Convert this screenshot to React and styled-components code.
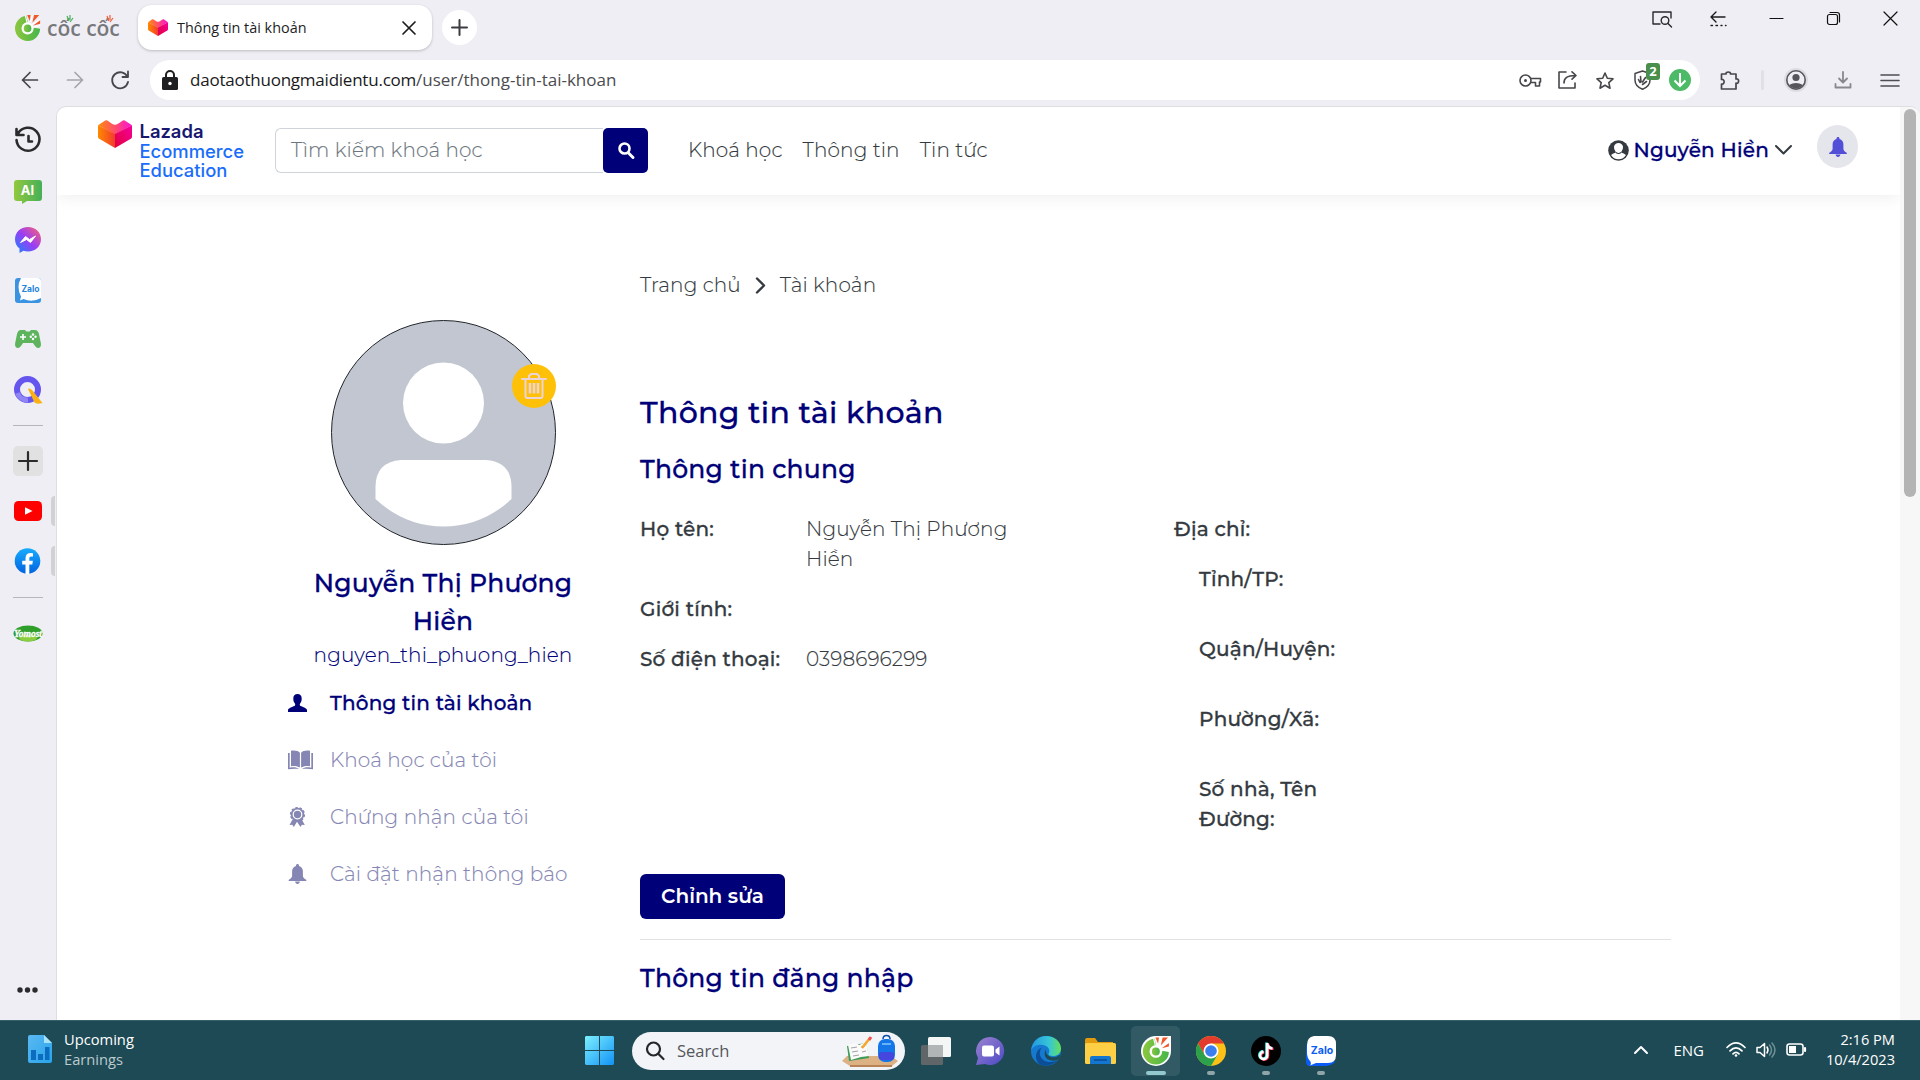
import React from 'react';
import styled, { createGlobalStyle, css } from 'styled-components';

const site = '"Montserrat", "Inter", "Noto Sans", sans-serif';
const system = '"Segoe UI", "Open Sans", "Noto Sans", sans-serif';
const navy = '#000078';

const light = css`
  font-weight: 300;
  letter-spacing: 0.006em;
  -webkit-text-stroke: 0.12px currentColor;
`;
const medium = css`
  font-weight: 500;
  letter-spacing: 0.01em;
  -webkit-text-stroke: 0.3px currentColor;
`;

const GlobalStyle = createGlobalStyle`
  *, *::before, *::after { box-sizing: border-box; }
  html, body { margin: 0; padding: 0; overflow: hidden; }
  svg { display: block; flex: none; overflow: visible; }
  h1, h2, p { margin: 0; }
`;

/* ---------- shell ---------- */
const Screen = styled.div`
  width: 1920px;
  height: 1080px;
  display: flex;
  flex-direction: column;
  background: #efeef4;
  font-family: ${system};
  overflow: hidden;
`;
const TabStrip = styled.div`
  height: 55px;
  flex: none;
  display: flex;
  align-items: flex-start;
  padding-left: 15px;
`;
const Brand = styled.div`
  position: relative;
  width: 123px;
  display: flex;
  align-items: center;
  gap: 6px;
  padding-top: 14px;
`;
const BrandName = styled.span`
  font: 600 21px/28px "Open Sans", sans-serif;
  color: #77787b;
  white-space: nowrap;
`;
const Rays = styled.svg`
  position: absolute;
  top: 15px;
  left: ${(p) => p.$left}px;
`;
const Tab = styled.div`
  width: 294px;
  height: 45px;
  margin-top: 5px;
  padding: 0 17px 0 10px;
  display: flex;
  align-items: center;
  background: #fff;
  border-radius: 14px;
  box-shadow: 0 1px 3px rgba(0, 0, 0, 0.22);
`;
const TabTitle = styled.span`
  flex: 1;
  margin-left: 9px;
  margin-top: -1px;
  font-size: 14.4px;
  color: #1d1d1f;
`;
const NewTab = styled.div`
  width: 35px;
  height: 35px;
  margin: 10px 0 0 10px;
  display: grid;
  place-items: center;
  border-radius: 50%;
  background: #fff;
`;
const WindowControls = styled.div`
  margin: 0 1px 0 auto;
  display: flex;
`;
const Slot = styled.div`
  width: ${(p) => p.$w}px;
  height: ${(p) => p.$h || 40}px;
  margin-right: ${(p) => p.$mr || 0}px;
  flex: none;
  display: flex;
  align-items: center;
  justify-content: center;
`;
const AddressRow = styled.div`
  height: 50px;
  margin-bottom: 1px;
  flex: none;
  display: flex;
  align-items: center;
  padding-left: 7px;
`;
const AddressBar = styled.div`
  width: 1550px;
  height: 40px;
  margin-left: 8px;
  padding: 0 1px 0 12px;
  display: flex;
  align-items: center;
  border-radius: 20px;
  background: #fff;
`;
const Url = styled.span`
  flex: 1;
  margin: -2px 0 0 12px;
  font-size: 17px;
  letter-spacing: -0.23px;
  color: #1a1a1c;
  em { font-style: normal; color: #4b4b50; letter-spacing: 0; }
`;
const ShieldWrap = styled.div` position: relative; `;
const ShieldCount = styled.span`
  position: absolute;
  left: 12px;
  top: -7px;
  width: 14px;
  height: 17px;
  border-radius: 3px;
  background: #4a8f4b;
  color: #fff;
  font: 700 13px/17px "Open Sans", sans-serif;
  text-align: center;
`;
const Divider = styled.i`
  width: 3px;
  height: 20px;
  border-radius: 2px;
  background: #e0e0e6;
`;
const Body = styled.div`
  flex: 1;
  min-height: 0;
  display: flex;
`;

/* ---------- browser side panel ---------- */
const SidePanel = styled.aside`
  width: 56px;
  flex: none;
  display: flex;
  flex-direction: column;
  align-items: flex-start;
  padding-top: 11px;
`;
const SideItem = styled.div`
  width: 55px;
  height: ${(p) => p.$h}px;
  flex: none;
  display: flex;
  align-items: center;
  justify-content: center;
  margin-top: ${(p) => p.$mt || 0}px;
`;
const SideRule = styled.hr`
  width: 30px;
  height: 1px;
  margin: 0;
  border: 0;
  background: #b5b5ba;
`;
const AddBox = styled.div`
  width: 30px;
  height: 30px;
  display: grid;
  place-items: center;
  border-radius: 5px;
  background: #e1e1e2;
`;
const OpenApp = styled(SideItem)`
  justify-content: space-between;
  padding-left: 14px;
  &::after {
    content: '';
    width: 4px;
    height: 30px;
    border-radius: 4px 0 0 4px;
    background: #d2d2d5;
  }
`;
const IconText = styled.text`
  font-family: ${(p) => p.$family || 'Inter, sans-serif'};
  font-weight: ${(p) => p.$weight || 700};
  font-size: ${(p) => p.$size}px;
  font-style: ${(p) => p.$style || 'normal'};
  text-anchor: middle;
`;

/* ---------- page ---------- */
const Page = styled.div`
  flex: 1;
  display: flex;
  border: 1px solid #dedee1;
  border-right: 0;
  border-bottom: 0;
  border-radius: 10px 10px 0 0;
  background: #fff;
  overflow: hidden;
`;
const Viewport = styled.div`
  flex: 1;
  min-width: 0;
  display: flex;
  flex-direction: column;
  font-family: ${site};
  font-size: 20px;
  line-height: 30px;
  color: #343a40;
`;
const ScrollTrack = styled.div`
  width: 20px;
  flex: none;
  padding: 2px 4px;
  background: #f7f7f8;
`;
const ScrollThumb = styled.div`
  width: 12px;
  height: 388px;
  border-radius: 6px;
  background: #b4b4b5;
`;
const Header = styled.header`
  height: 88px;
  flex: none;
  display: flex;
  align-items: flex-start;
  padding-left: 41px;
  box-shadow: 0 2px 16px rgba(0, 0, 0, 0.07);
`;
const Logo = styled.div`
  width: 177px;
  display: flex;
  gap: 7.5px;
  padding-top: 13px;
`;
const LogoWords = styled.div`
  padding-top: 2px;
  font-family: "Inter", sans-serif;
  font-size: 18.4px;
  line-height: 19.7px;
  font-weight: 500;
  color: #1a6dfb;
`;
const LogoName = styled.div`
  font-weight: 600;
  color: #17176f;
`;
const Search = styled.div`
  width: 373px;
  height: 45px;
  margin-top: 21px;
  display: flex;
  border-radius: 6px;
`;
const SearchField = styled.div`
  ${light}
  flex: 1;
  padding: 6px 15px;
  border: 1px solid #ced4da;
  border-right: 0;
  border-radius: 6px 0 0 6px;
  color: #6c757d;
`;
const SearchButton = styled.div`
  width: 45px;
  display: grid;
  place-items: center;
  border-radius: 5px;
  background: ${navy};
`;
const Nav = styled.nav`
  ${light}
  display: flex;
  gap: 20px;
  margin: 28px 0 0 40px;
`;
const UserMenu = styled.div`
  ${medium}
  margin: 28px 0 0 auto;
  display: flex;
  align-items: center;
  color: ${navy};
`;
const UserName = styled.span` margin: 0 6px 0 4px; `;
const BellButton = styled.div`
  width: 41px;
  height: 43px;
  margin: 18px 42px 0 25px;
  display: grid;
  place-items: center;
  border-radius: 50%;
  background: #e5e5ec;
`;
const Content = styled.div`
  flex: 1;
  min-height: 0;
  display: flex;
  gap: 27px;
  padding-left: 216px;
`;
const Profile = styled.aside`
  width: 340px;
  flex: none;
  display: flex;
  flex-direction: column;
  align-items: center;
  padding-top: 125px;
`;
const Avatar = styled.div`
  position: relative;
  width: 225px;
  height: 225px;
  border: 1px solid #212529;
  border-radius: 50%;
  background: #c1c6d1;
`;
const DeleteBadge = styled.div`
  position: absolute;
  top: 43px;
  right: -1px;
  width: 44px;
  height: 44px;
  display: grid;
  place-items: center;
  border-radius: 50%;
  background: #ffc107;
`;
const ProfileName = styled.h2`
  ${medium}
  margin-top: 19px;
  width: 280px;
  font-size: 25px;
  line-height: 38px;
  text-align: center;
  color: ${navy};
`;
const Handle = styled.p`
  ${light}
  color: ${navy};
`;
const Menu = styled.nav`
  width: 326px;
  margin-top: 18px;
  display: flex;
  flex-direction: column;
  gap: 27px;
`;
const MenuItem = styled.div`
  ${(p) => (p.$active ? medium : light)}
  height: 30px;
  display: flex;
  align-items: center;
  padding-left: 8px;
  color: ${(p) => (p.$active ? navy : '#8586b3')};
  white-space: nowrap;
`;
const MenuIcon = styled.span` width: 42px; `;
const Account = styled.main`
  width: 1031px;
  padding-top: 75px;
`;
const Breadcrumb = styled.div`
  ${light}
  display: flex;
  align-items: center;
  svg { margin: 0 14px; }
`;
const Title = styled.h1`
  ${medium}
  margin-top: 95px;
  font-size: 30px;
  line-height: 36px;
  color: ${navy};
`;
const SectionTitle = styled.h2`
  ${medium}
  margin-top: 23px;
  font-size: 25px;
  line-height: 30px;
  color: ${navy};
`;
const Details = styled.div`
  height: 330px;
  margin-top: 30px;
  display: grid;
  grid-template-columns: 534px 1fr;
`;
const Fields = styled.div`
  display: flex;
  flex-direction: column;
  gap: 20px;
`;
const Field = styled.div`
  display: grid;
  grid-template-columns: 166px 220px;
`;
const Label = styled.span`
  ${medium}
  white-space: nowrap;
`;
const Value = styled.span`
  ${light}
`;
const Address = styled.div`
  display: flex;
  flex-direction: column;
`;
const AddressParts = styled.div`
  margin-top: 20px;
  padding-left: 25px;
  display: flex;
  flex-direction: column;
  gap: 40px;
`;
const EditButton = styled.button`
  width: 145px;
  height: 45px;
  margin-top: 30px;
  padding: 0;
  display: block;
  border: 0;
  border-radius: 6px;
  background: ${navy};
  color: #fff;
  font: 600 20px/43px ${site};
`;
const Rule = styled.hr`
  height: 1px;
  margin: 20px 0 0;
  border: 0;
  background: #e2e2e4;
`;

/* ---------- taskbar ---------- */
const Taskbar = styled.footer`
  height: 60px;
  flex: none;
  display: grid;
  grid-template-columns: 577px 780px 1fr;
  background: #1e4a55;
  border-top: 1px solid #35606a;
  color: #fff;
  font-size: 15px;
`;
const Widgets = styled.div`
  display: flex;
  gap: 12px;
  padding: 14px 0 0 28px;
`;
const WidgetText = styled.div`
  margin-top: -6px;
  line-height: 20px;
  font-size: 14.7px;
  span { display: block; color: #bccbce; }
`;
const Apps = styled.div`
  display: flex;
  align-items: center;
`;
const SearchPill = styled.div`
  width: 273px;
  height: 38px;
  flex: none;
  margin-right: 6px;
  padding: 0 7px 0 14px;
  display: flex;
  align-items: center;
  border-radius: 19px;
  background: #f3f4f7;
  font-size: 16.5px;
  color: #55575c;
`;
const PillText = styled.span`
  flex: 1;
  margin: -1px 0 0 13px;
`;
const TaskApp = styled.div`
  width: 49px;
  height: 50px;
  margin-right: 6px;
  flex: none;
  display: grid;
  grid-template-rows: 10px 30px 1fr;
  justify-items: center;
  border-radius: 5px;
  background: ${(p) => (p.$active ? 'rgba(255,255,255,.09)' : 'transparent')};
  svg { grid-row: 2; align-self: center; }
  &::after {
    content: '';
    grid-row: 3;
    align-self: end;
    margin-bottom: 1px;
    width: ${(p) => (p.$active ? 20 : p.$open ? 8 : 0)}px;
    height: 4px;
    border-radius: 2px;
    background: ${(p) => (p.$active ? '#93c8cf' : '#90a5aa')};
  }
`;
const Tray = styled.div`
  display: flex;
  align-items: center;
  justify-content: flex-end;
  padding: 0 25px 2px 0;
`;
const Lang = styled.span` margin: 0 22px 0 25px; `;
const Clock = styled.div`
  width: 89px;
  margin-top: -2px;
  font-size: 14.6px;
  line-height: 20px;
  text-align: right;
`;

/* ---------- drawings ---------- */
const Line = ({ w, h = w, c = '#46464b', s = 1.6, children }) => (
  <svg width={w} height={h} viewBox={`0 0 ${w} ${h}`} fill="none" stroke={c} strokeWidth={s} strokeLinecap="round" strokeLinejoin="round">
    {children}
  </svg>
);

const CocCoc = ({ w = 26, h = 26, white, id }) => (
  <svg width={w} height={h} viewBox="0 0 30 30">
    <defs><linearGradient id={id}><stop stopColor="#8dc63f" /><stop offset="1" stopColor="#45b649" /></linearGradient></defs>
    {white && <path d="M15 0H30V15A15 15 0 1 1 15 0Z" fill="#fff" />}
    <g transform={white ? 'translate(1.8 1.5) scale(.9)' : undefined}>
      <path d="M13 1A14.5 14.5 0 1 0 29 16L20 14.5A6 6 0 1 1 15 9Z" fill={`url(#${id})`} />
      <circle cx="14.5" cy="15.5" r="7" fill="#fff" />
      <circle cx="14.5" cy="15.5" r="4.4" fill={`url(#${id})`} />
      <path d="M14 0l4 0-1 7zM22 0h6l-8 9zM29 6v4l-8 2z" fill="#f1592a" />
      <path d="M12 1l2 8M20 0l-2 8M29 5l-9 6M29 12l-8 2" stroke="#fff" strokeWidth="1.3" />
    </g>
  </svg>
);

const Lazada = ({ w, h, id }) => (
  <svg width={w} height={h} viewBox="0 0 34 29" preserveAspectRatio="none">
    <defs>
      <linearGradient id={`${id}a`}><stop stopColor="#ff8a00" /><stop offset="1" stopColor="#f23b2e" /></linearGradient>
      <linearGradient id={`${id}b`} x1="0" y1="1" x2="1" y2="0"><stop stopColor="#e3003c" /><stop offset="1" stopColor="#f5009b" /></linearGradient>
      <linearGradient id={`${id}c`}><stop stopColor="#ff8c0a" /><stop offset=".5" stopColor="#ff4e6a" /><stop offset="1" stopColor="#fb12d8" /></linearGradient>
    </defs>
    <path d="M0 5.5L7.2.6Q8.5 0 9.7.7L14 3.9Q17 5.7 20 3.9L24.5.7Q25.5 0 26.7.6L34 5.5 17 15Z" fill={`url(#${id}c)`} />
    <path d="M0 5.5L17 14.5V29L1.2 19.5Q0 18.7 0 17.5Z" fill={`url(#${id}a)`} />
    <path d="M34 5.5L17 14.5V29L32.8 19.5Q34 18.7 34 17.5Z" fill={`url(#${id}b)`} />
  </svg>
);

const Bell = ({ w, h, c }) => (
  <svg width={w} height={h} viewBox="0 0 18 20" fill={c}>
    <path d="M9 0c.9 0 1.5.6 1.5 1.5v.4c2.5.7 3.9 2.7 3.9 5.3v4.6c0 1.5.9 2.8 3.2 4 .6.3.5 1.2-.3 1.2H.7c-.8 0-.9-.9-.3-1.2 2.3-1.2 3.2-2.5 3.2-4V7.2c0-2.6 1.4-4.6 3.9-5.3v-.4C7.5.6 8.1 0 9 0ZM6.6 17.6h4.8C11.2 19.1 10.3 20 9 20s-2.2-.9-2.4-2.4Z" />
  </svg>
);

const Zalo = () => (
  <svg width="30" height="30" viewBox="0 0 30 30">
    <path d="M8 2Q0 4 0 14v12q0 3 3 4h17q6-1 9-4z" fill="#0a5cf5" />
    <path d="M8 0h14q8 0 8 8v11q0 8-8 8H10l-6 2.5q1.5-2 .5-4Q1 22 1 17V9Q1 1 8 0Z" fill="#fff" />
    <IconText x="16" y="17.5" $size={10.5} fill="#0a5cf5">Zalo</IconText>
  </svg>
);

const menu = [
  { text: 'Thông tin tài khoản', active: true, icon: (
    <svg width="19" height="18" viewBox="0 0 19 18" fill="currentColor"><path d="M9.5 0c2.7 0 4.2 1.5 4.2 4.5 0 2-.5 3.5-1.3 4.6-.7.9-.8 2-.4 2.5.9 1 6.5 2.2 7 4.4v2H0v-2c.5-2.2 6.1-3.4 7-4.4.4-.5.3-1.6-.4-2.5C5.8 8 5.3 6.5 5.3 4.5 5.3 1.5 6.8 0 9.5 0Z" /></svg>) },
  { text: 'Khoá học của tôi', icon: (
    <svg width="25" height="20" viewBox="0 0 25 20" fill="currentColor"><path d="M3 .8C7 .2 10.4 1 11.9 2.8V17.5C9.5 15.9 6.5 15.6 3 16.2ZM22 .8C18 .2 14.6 1 13.1 2.8V17.5c2.4-1.6 5.4-1.9 8.9-1.3ZM0 3h1.7v14.7c3.6-.8 7-.7 9.3 1.3-3.5-.6-7.3-.4-11 .3ZM25 3h-1.7v14.7c-3.6-.8-7-.7-9.3 1.3 3.5-.6 7.3-.4 11 .3Z" /></svg>) },
  { text: 'Chứng nhận của tôi', icon: (
    <svg width="19" height="20" viewBox="0 0 19 20" fill="currentColor"><path d="M4.5 12.5L1.5 18l2.8-.3L5.8 20 9 14.8 12.5 20l1.3-2.3 3 .3-3-5.5Z" /><circle cx="9.5" cy="7.5" r="6.8" /><circle cx="9.5" cy="7.5" r="6.9" fill="none" stroke="currentColor" strokeWidth="1.4" strokeDasharray="2.5 1.8" /><circle cx="9.5" cy="7.5" r="4.3" fill="none" stroke="#fff" strokeWidth="1.2" /></svg>) },
  { text: 'Cài đặt nhận thông báo', icon: <Bell w={19} h={20} c="currentColor" /> },
];

const fields = [
  { label: 'Họ tên:', value: 'Nguyễn Thị Phương Hiền' },
  { label: 'Giới tính:', value: '' },
  { label: 'Số điện thoại:', value: '0398696299' },
];

const addressParts = [['Tỉnh/TP:'], ['Quận/Huyện:'], ['Phường/Xã:'], ['Số nhà, Tên', 'Đường:']];

const TopBar = () => (
  <TabStrip>
    <Brand>
      <CocCoc id="brand" />
      <BrandName>cốc cốc</BrandName>
      <Rays $left={51} width="7" height="8" viewBox="0 0 7 8" stroke="#49b35a" strokeWidth="1.2"><path d="M1 1l2 5M4 0v5M7 3L4 7" /></Rays>
      <Rays $left={91} width="7" height="8" viewBox="0 0 7 8" stroke="#f05a35" strokeWidth="1.2"><path d="M1 1l2 5M4 0v5M7 3L4 7" /></Rays>
    </Brand>
    <Tab>
      <Lazada w={20} h={17} id="fav" />
      <TabTitle>Thông tin tài khoản</TabTitle>
      <Line w={12} c="#1d1d1f" s={1.7}><path d="M0 0l12 12M12 0L0 12" /></Line>
    </Tab>
    <NewTab><Line w={15} c="#3c3c40" s={2}><path d="M7.5 0v15M0 7.5h15" /></Line></NewTab>
    <WindowControls>
      <Slot $w={57} $h={37}>
        <Line w={20} h={16} c="#2a2a2d" s={1.4}><path d="M8 13H1V1h18v6" /><circle cx="13" cy="9.5" r="3.8" /><path d="M16 12.5l3.5 3.5" /></Line>
      </Slot>
      <Slot $w={57} $h={37}>
        <Line w={17} h={16} c="#1c1c1e" s={1.4}><path d="M15 6H1M6 1L1 6l5 5" /><path d="M1 14.5h1.5M6 14.5h1.5M11 14.5h1M15.5 14.5h.5" /></Line>
      </Slot>
      <Slot $w={58} $h={36}><Line w={13} h={2} c="#111" s={1.2}><path d="M0 1.5h13" /></Line></Slot>
      <Slot $w={57} $h={37}><Line w={13} c="#111" s={1.2}><rect x=".5" y="2.5" width="10" height="10" rx="2" /><path d="M3 .5h7q2.5 0 2.5 2.5v7" /></Line></Slot>
      <Slot $w={57} $h={37}><Line w={13} c="#111" s={1.2}><path d="M0 0l13 13M13 0L0 13" /></Line></Slot>
    </WindowControls>
  </TabStrip>
);

const AddressArea = () => (
  <AddressRow>
    <Slot $w={45}><Line w={16} s={1.7}><path d="M15.5 8H.5M8 .5L.5 8 8 15.5" /></Line></Slot>
    <Slot $w={45}><Line w={16} c="#a5a5aa" s={1.7}><path d="M.5 8h15M8 .5L15.5 8 8 15.5" /></Line></Slot>
    <Slot $w={45}><Line w={18} s={1.8}><path d="M16.5 6A8 8 0 1 0 17 11M17 .5V6h-5.5" /></Line></Slot>
    <AddressBar>
      <svg width="16" height="20" viewBox="0 0 16 20"><path d="M4 8V5a4 4 0 0 1 8 0v3" fill="none" stroke="#1f1f21" strokeWidth="2" /><rect y="7" width="16" height="13" rx="1.5" fill="#1f1f21" /><circle cx="8" cy="13.5" r="1.7" fill="#fff" /></svg>
      <Url>daotaothuongmaidientu.com<em>/user/thong-tin-tai-khoan</em></Url>
      <Slot $w={37}><Line w={22} h={13}><circle cx="6.5" cy="6.5" r="5.5" /><circle cx="6.5" cy="6.5" r="1.5" fill="#46464b" stroke="none" /><path d="M12 4.5h9.5v3.5h-1v4h-4V8.500h-4.5" /></Line></Slot>
      <Slot $w={38}><Line w={19} h={18}><path d="M8 1H1v16h16v-5" /><path d="M6 12c0-5 3-7.5 11.5-7.5M14 .8l4 3.7-4 3.7" /></Line></Slot>
      <Slot $w={38}><Line w={18} h={17}><path d="M9 1l2.3 5.2 5.7.6-4.2 3.8 1.2 5.6L9 13.3 4 16.2l1.2-5.6L1 6.8l5.7-.6z" /></Line></Slot>
      <Slot $w={37}>
        <ShieldWrap>
          <Line w={17} h={20} s={1.5}><path d="M8.5 1L16 3.5V10c0 4.5-3 7.5-7.5 9.3C4 17.5 1 14.5 1 10V3.5Z" /><path d="M4.5 9.5l1.5 3M6.5 6.5l.5 5.5M8.5 12l3-4.5M8.5 14.5l4-3" strokeWidth="1.6" /></Line>
          <ShieldCount>2</ShieldCount>
        </ShieldWrap>
      </Slot>
      <Slot $w={38}>
        <svg width="22" height="22" viewBox="0 0 22 22"><circle cx="11" cy="11" r="11" fill="#4dba68" /><path d="M11 4v13M5.5 11.5L11 17l5.5-5.5" fill="none" stroke="#fff" strokeWidth="2" /></svg>
      </Slot>
    </AddressBar>
    <Slot $w={60}><Line w={20} h={19} s={1.7}><path d="M1.5 3H6C5.5.3 11 .3 10.5 3H16v5c3.5-.8 3.5 5 0 4.2V18H1.5v-5c3.5.8 3.5-5.2 0-4.5Z" /></Line></Slot>
    <Slot $w={5}><Divider /></Slot>
    <Slot $w={61}>
      <svg width="24" height="24" viewBox="0 0 24 24"><circle cx="12" cy="12" r="12" fill="#dcdce1" /><circle cx="12" cy="12" r="9.2" fill="#efeef4" stroke="#55555b" strokeWidth="1.6" /><circle cx="12" cy="9.5" r="3.6" fill="#55555b" /><path d="M5 17q7-4 14 0-7 7.500-14 0" fill="#55555b" /></svg>
    </Slot>
    <Slot $w={33}><Line w={16} h={16} c="#88888d" s={1.8}><path d="M8 0v10M4 6.5L8 10.5l4-4M.5 12v3.5h15V12" /></Line></Slot>
    <Slot $w={61}><Line w={18} h={13} c="#4d4d52" s={1.6}><path d="M0 1h18M0 6.5h18M0 12h18" /></Line></Slot>
  </AddressRow>
);

const LeftPanel = () => (
  <SidePanel>
    <SideItem $h={48}><Line w={26} h={26} c="#2b2b2d" s={2.6}><path d="M3 5.5A11.5 11.5 0 1 1 1.5 12M1.5 1v6h7M13.5 8v5.5H17" /></Line></SideItem>
    <SideItem $h={54}>
      <svg width="28" height="24" viewBox="0 0 28 24"><defs><linearGradient id="ai"><stop stopColor="#93c83d" /><stop offset="1" stopColor="#46b058" /></linearGradient></defs><path d="M3 0h22q3 0 3 3v15q0 3-3 3H13l-5 3v-3H3q-3 0-3-3V3q0-3 3-3Z" fill="url(#ai)" /><IconText x="13.5" y="14.5" $size={13} fill="#fff">AI</IconText></svg>
    </SideItem>
    <SideItem $h={42}>
      <svg width="26" height="26" viewBox="0 0 26 26"><defs><linearGradient id="ms" x1="0" y1="1" x2="1" y2="0"><stop stopColor="#1388ff" /><stop offset=".5" stopColor="#9a3df5" /><stop offset="1" stopColor="#ff6470" /></linearGradient></defs><path d="M13 0C5.5 0 0 5.3 0 12.3c0 3.9 1.7 7 4.5 9.2V26l4-2.2c1.4.4 2.9.6 4.5.6 7.5 0 13-5.3 13-12.2S20.5 0 13 0Z" fill="url(#ms)" /><path d="M5.5 15.5L10.5 9.5l4 3 6-3.5-5 6.5-4-3z" fill="#fff" stroke="#fff" strokeLinejoin="round" /></svg>
    </SideItem>
    <SideItem $h={58}>
      <svg width="26" height="25" viewBox="0 0 26 25"><rect width="26" height="25" rx="3" fill="#3a93e0" /><path d="M6 0h17q3 0 3 3v17Q17 25 8.5 21L5 22.5l1-4Q1 9 6 0Z" fill="#fff" /><IconText x="15.5" y="13.5" $size={8.5} fill="#1f86dc">Zalo</IconText></svg>
    </SideItem>
    <SideItem $h={40}>
      <svg width="26" height="18" viewBox="0 0 26 18"><path d="M6 0h4l1.5 1.5h3L16 0h4q3 0 4 4l2 10q0 4-3 4-2 0-5-5H8q-3 5-5 5-3 0-3-4L2 4q1-4 4-4Z" fill="#5db45d" /><path d="M8 4v6M5 7h6" stroke="#fff" strokeWidth="1.6" /><g fill="#fff"><circle cx="18" cy="4.5" r="1.2" /><circle cx="18" cy="9" r="1.2" /><circle cx="15.8" cy="6.8" r="1.2" /><circle cx="20.5" cy="6.8" r="1.2" /></g></svg>
    </SideItem>
    <SideItem $h={62}>
      <svg width="28" height="28" viewBox="0 0 28 28"><circle cx="13.5" cy="13.5" r="10.5" fill="none" stroke="#6555ef" strokeWidth="6" /><path d="M3.5 17A10.5 10.5 0 0 0 14 24" fill="none" stroke="#b9b4fa" strokeWidth="5" opacity=".5" /><path d="M14 13q1-1.5 4 1l10.5 13q-6 1.5-8-.5z" fill="#fbb116" /></svg>
    </SideItem>
    <SideItem $h={9}><SideRule /></SideItem>
    <SideItem $h={62}><AddBox><Line w={20} c="#2b2b2d" s={2.2}><path d="M10 1v18M1 10h18" /></Line></AddBox></SideItem>
    <OpenApp $h={38}><svg width="28" height="20" viewBox="0 0 28 20"><rect width="28" height="20" rx="4.5" fill="#f00" /><path d="M11 6.2l7.5 3.8-7.5 3.8z" fill="#fff" /></svg></OpenApp>
    <OpenApp $h={62}>
      <svg width="27" height="26" viewBox="0 0 26 26"><defs><linearGradient id="fb" x2="0" y2="1"><stop stopColor="#18acfe" /><stop offset="1" stopColor="#0163e0" /></linearGradient></defs><circle cx="13" cy="13" r="12.8" fill="url(#fb)" /><path d="M11 26v-9.5H7.7v-3.7H11v-2.6C11 6.8 13 5 16 5l2.5.2v3.2h-1.7c-1.5 0-2 .9-2 2v2.4h3.6l-.6 3.7h-3V26Z" fill="#fff" /></svg>
    </OpenApp>
    <SideItem $h={10}><SideRule /></SideItem>
    <SideItem $h={62}>
      <svg width="30" height="17" viewBox="0 0 30 17"><ellipse cx="15" cy="8.5" rx="14.5" ry="8" fill="#2f9e2b" /><ellipse cx="15" cy="13" rx="9" ry="3.5" fill="#8ace3f" /><IconText x="15" y="11.5" $size={9.5} $style="italic" $family="Liberation Serif, serif" fill="#fff" stroke="#fff" strokeWidth=".3">Yomost</IconText></svg>
    </SideItem>
    <SideItem $h={40} $mt={306}>
      <svg width="21" height="6" viewBox="0 0 21 6" fill="#2b2b2d"><circle cx="3" cy="3" r="2.7" /><circle cx="10.5" cy="3" r="2.7" /><circle cx="18" cy="3" r="2.7" /></svg>
    </SideItem>
  </SidePanel>
);

const SiteHeader = () => (
  <Header>
    <Logo>
      <Lazada w={34} h={28} id="logo" />
      <LogoWords><LogoName>Lazada</LogoName><div>Ecommerce</div><div>Education</div></LogoWords>
    </Logo>
    <Search>
      <SearchField>Tìm kiếm khoá học</SearchField>
      <SearchButton><Line w={16} h={17} c="#fff" s={2.6}><circle cx="6.5" cy="6.5" r="5" /><path d="M10.5 11l4.5 4.5" strokeWidth="3" /></Line></SearchButton>
    </Search>
    <Nav><span>Khoá học</span><span>Thông tin</span><span>Tin tức</span></Nav>
    <UserMenu>
      <svg width="21" height="21" viewBox="0 0 21 21"><circle cx="10.5" cy="10.5" r="10.3" fill="#343a40" /><path d="M3 15Q5 13 8 12.5 5.5 9 6 6.5 7 3 10.5 3T15 6.5Q15.5 9 13 12.5q3 .5 5 2.5-2.5 4.2-7.5 4.2T3 15Z" fill="#fff" /><path d="M8 12.5q2.5 2 5 0" stroke="#343a40" fill="none" strokeWidth="1.2" /></svg>
      <UserName>Nguyễn Hiền</UserName>
      <Line w={17} h={10} c="#343a40" s={2}><path d="M1 1l7.5 7.5L16 1" /></Line>
    </UserMenu>
    <BellButton><Bell w={18} h={20} c="#5350d8" /></BellButton>
  </Header>
);

const ProfilePanel = () => (
  <Profile>
    <Avatar>
      <svg width="223" height="223" viewBox="0 0 223 223" fill="#fff"><circle cx="111.5" cy="82" r="40.5" /><path d="M69 139H154q25.500 2 25.500 27v12Q150 205.500 111.500 205.500T43.500 178v-12q0-25 25.500-27Z" /></svg>
      <DeleteBadge>
        <Line w={24} h={26} c="#ecd3d8" s={2}><path d="M0 6h24M7 5.5V3l2-2h6l2 2v2.5M3.5 6.5V23q0 2 2 2h13q2 0 2-2V6.5" /><path d="M8 10v10.5M12 10v10.5M16 10v10.5" strokeLinecap="butt" strokeWidth="2.5" /></Line>
      </DeleteBadge>
    </Avatar>
    <ProfileName>Nguyễn Thị Phương Hiền</ProfileName>
    <Handle>nguyen_thi_phuong_hien</Handle>
    <Menu>
      {menu.map((m) => (
        <MenuItem key={m.text} $active={m.active}><MenuIcon>{m.icon}</MenuIcon>{m.text}</MenuItem>
      ))}
    </Menu>
  </Profile>
);

const AccountInfo = () => (
  <Account>
    <Breadcrumb>
      <span>Trang chủ</span>
      <Line w={11} h={17} c="#343a40" s={2.4}><path d="M2 1.5l7 7-7 7" /></Line>
      <span>Tài khoản</span>
    </Breadcrumb>
    <Title>Thông tin tài khoản</Title>
    <SectionTitle>Thông tin chung</SectionTitle>
    <Details>
      <Fields>
        {fields.map((f) => (
          <Field key={f.label}><Label>{f.label}</Label><Value>{f.value}</Value></Field>
        ))}
      </Fields>
      <Address>
        <Label>Địa chỉ:</Label>
        <AddressParts>
          {addressParts.map((lines) => (
            <div key={lines[0]}>
              {lines.map((l) => (<div key={l}><Label>{l}</Label></div>))}
            </div>
          ))}
        </AddressParts>
      </Address>
    </Details>
    <EditButton>Chỉnh sửa</EditButton>
    <Rule />
    <SectionTitle>Thông tin đăng nhập</SectionTitle>
  </Account>
);

const WindowsTaskbar = () => (
  <Taskbar>
    <Widgets>
      <svg width="24" height="28" viewBox="0 0 24 28"><defs><linearGradient id="wd" x2="1" y2="1"><stop stopColor="#5cb8f2" /><stop offset="1" stopColor="#27a5ea" /></linearGradient></defs><path d="M2 0h14l8 8v18q0 2-2 2H2q-2 0-2-2V2Q0 0 2 0Z" fill="url(#wd)" /><path d="M16 0l8 8h-8z" fill="#a7e2fb" /><path d="M3 15h5v10H3zM10 19h5v6h-5zM17 12h4.5v13H17z" fill="#0b6cc0" /></svg>
      <WidgetText>Upcoming<span>Earnings</span></WidgetText>
    </Widgets>
    <Apps>
      <Slot $w={45} $mr={10}>
        <svg width="29" height="29" viewBox="0 0 29 29"><defs><linearGradient id="win" x2="1" y2="1"><stop stopColor="#7df0ff" /><stop offset="1" stopColor="#1292f5" /></linearGradient></defs><path d="M1 0h13v14H0V1zM15 0h13l1 1v13H15zM0 15h14v14H1l-1-1zM15 15h14v13l-1 1H15z" fill="url(#win)" /></svg>
      </Slot>
      <SearchPill>
        <Line w={18} h={19} c="#26272b" s={2.2}><circle cx="7.5" cy="8" r="6.5" /><path d="M12.5 13l5 5" /></Line>
        <PillText>Search</PillText>
        <svg width="56" height="32" viewBox="0 0 56 32">
          <path d="M0 26l5-5h44l7 5-6 5H8z" fill="#dcb184" /><path d="M8 31h42" stroke="#b98355" strokeWidth="2" />
          <path d="M5 11l19-3 3 15-20 3z" fill="#3c9b57" /><path d="M6 10l8-2 3 2 7-3 3 14-8 1-10 3z" fill="#fafafa" /><path d="M9 13l6-1M10 17l6-1M11 21l6-1M19 12l4-1M20 17l4-1" stroke="#8c8c92" strokeWidth=".8" />
          <path d="M28 3l-8 10" stroke="#f6a42a" strokeWidth="2.5" /><path d="M29 2l-2 3" stroke="#ef5350" strokeWidth="3" />
          <rect x="36" y="4" width="17" height="23" rx="7" fill="#1576e8" /><path d="M41 4q0-3.5 3.5-3.5T48 4" stroke="#0b4fae" fill="none" strokeWidth="1.5" /><rect x="37" y="17" width="15" height="8" rx="3" fill="#4546dd" /><path d="M40 9h9" stroke="#80c8ff" strokeWidth="1.5" />
        </svg>
      </SearchPill>
      <TaskApp>
        <svg width="30" height="28" viewBox="0 0 30 28"><rect x="0" y="8" width="22" height="20" rx="1.5" fill="#606568" /><rect x="7" y="0" width="23" height="20" rx="1.5" fill="#f4f5f5" /><rect x="7" y="8" width="15" height="12" fill="#b2b5b6" /></svg>
      </TaskApp>
      <TaskApp>
        <svg width="29" height="28" viewBox="0 0 29 28"><defs><linearGradient id="tm" y2="1" x2="1"><stop stopColor="#9c83d1" /><stop offset="1" stopColor="#4c49c5" /></linearGradient></defs><path d="M14.5 0A14 14 0 1 1 9 27L0 28l2-7A14 14 0 0 1 14.5 0Z" fill="url(#tm)" /><rect x="6" y="8.5" width="12" height="11" rx="2" fill="#fff" /><path d="M19.5 12.5l4-3v9l-4-3z" fill="#fff" /></svg>
      </TaskApp>
      <TaskApp>
        <svg width="30" height="30" viewBox="0 0 30 30"><defs><linearGradient id="ed"><stop stopColor="#2497e0" /><stop offset=".6" stopColor="#36c5d8" /><stop offset="1" stopColor="#64e05a" /></linearGradient></defs><circle cx="15" cy="15" r="15" fill="#1479cf" /><path d="M0 15C1 5 8 0 15 0c9 0 15 6 15 12.5 0 5-4 7.5-7.5 7.5-4 0-6-1-4.5-3 1-1.5.5-5-3-7C9.5 7.5 2 9 0 15Z" fill="url(#ed)" /><path d="M11 11.5C6 17 10 26 19 26q5 0 8-2.5Q22 30 14 30 4 28.5 5 19q.8-5.5 6-7.5Z" fill="#0b4e97" /><path d="M15 13q-1 6 5 8 5 1 9.500-2.500L28 23q-6 3.500-12 0-4-4-1-10Z" fill="#1e4a55" /></svg>
      </TaskApp>
      <TaskApp>
        <svg width="31" height="26" viewBox="0 0 31 26"><path d="M0 2q0-2 2-2h8l3 4h15v6H0z" fill="#e29b0c" /><rect y="5" width="31" height="21" rx="1.5" fill="#fdcf45" /><path d="M5 26v-6q0-2 2-2h17q2 0 2 2v6z" fill="#1376cf" /><path d="M9 22h13" stroke="#0a4b94" strokeWidth="1.5" /></svg>
      </TaskApp>
      <TaskApp $active><CocCoc w={30} h={30} white id="task" /></TaskApp>
      <TaskApp $open>
        <svg width="30" height="30" viewBox="0 0 30 30"><circle cx="15" cy="15" r="15" fill="#fbc116" /><path d="M2 7.5A15 15 0 0 1 28 7.5H15L8.5 18.7Z" fill="#e33b2e" /><path d="M2 7.5A15 15 0 0 0 15 30L21.5 18.7 8.5 18.7Z" fill="#2ca14c" /><circle cx="15" cy="15" r="7.5" fill="#fff" /><circle cx="15" cy="15" r="5.8" fill="#3b7fee" /></svg>
      </TaskApp>
      <TaskApp $open>
        <svg width="30" height="30" viewBox="0 0 30 30"><circle cx="15" cy="15" r="15" fill="#000" /><g fill="none" strokeWidth="2.6"><path d="M15.5 6.5v12.5a3.6 3.6 0 1 1-3.6-3.6M15.5 7q.6 4.5 5.5 5" stroke="#25f4ee" /><path d="M17 7.5v12.5a3.6 3.6 0 1 1-3.6-3.6M17 8q.6 4.5 5.5 5" stroke="#fe2c55" /><path d="M16.2 7v12.5a3.6 3.6 0 1 1-3.6-3.6M16.2 7.5q.6 4.5 5.3 5" stroke="#fff" /></g></svg>
      </TaskApp>
      <TaskApp $open><Zalo /></TaskApp>
    </Apps>
    <Tray>
      <Line w={14} h={8} c="#fff" s={2}><path d="M1 7l6-6 6 6" /></Line>
      <Lang>ENG</Lang>
      <Line w={20} h={15} c="#fff" s={1.7}><path d="M1 5.5q9-9 18 0M4 8.8q6-6 12 0M7 11.8q3-3 6 0" /><circle cx="10" cy="13.5" r="1.3" fill="#fff" stroke="none" /></Line>
      <Slot $w={40}>
        <Line w={20} h={16} c="#fff" s={1.5}><path d="M1 5.5h3l4.5-4v13l-4.5-4H1zM11 5q2 3 0 6" /><path d="M13.5 3q4 5 0 10M16 1q6 7 0 14" stroke="#6f8f96" /></Line>
      </Slot>
      <Line w={20} h={13} c="#fff" s={1.6}><rect x="1" y="1" width="16" height="11" rx="2.5" /><rect x="3" y="3" width="7" height="7" fill="#fff" stroke="none" /><path d="M19 5v3" strokeWidth="2.2" /></Line>
      <Clock>2:16 PM<br />10/4/2023</Clock>
    </Tray>
  </Taskbar>
);

export default function App() {
  return (
    <Screen>
      <GlobalStyle />
      <TopBar />
      <AddressArea />
      <Body>
        <LeftPanel />
        <Page>
          <Viewport>
            <SiteHeader />
            <Content>
              <ProfilePanel />
              <AccountInfo />
            </Content>
          </Viewport>
          <ScrollTrack><ScrollThumb /></ScrollTrack>
        </Page>
      </Body>
      <WindowsTaskbar />
    </Screen>
  );
}
